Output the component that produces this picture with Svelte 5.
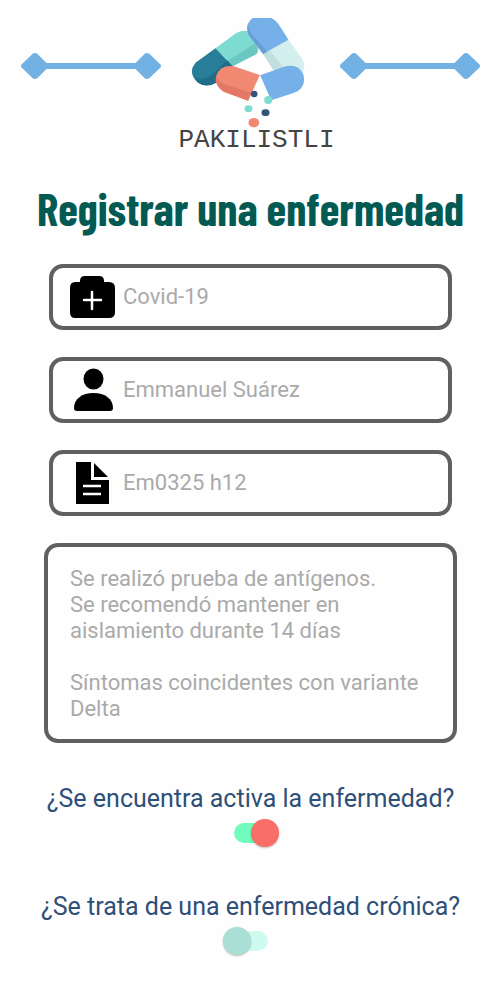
<script>
  let illness = $state('Covid-19');
  let patient = $state('Emmanuel Suárez');
  let code = $state('Em0325 h12');
  let notes = $state(
    'Se realizó prueba de antígenos.\nSe recomendó mantener en aislamiento durante 14 días\n\nSíntomas coincidentes con variante Delta'
  );
  let active = $state(true);
  let chronic = $state(false);
</script>

{#snippet ornament()}
  <svg class="ornament" viewBox="0 0 141 28" aria-hidden="true">
    <path d="M14 14H127" stroke="#72b1e4" stroke-width="6" />
    <path d="M1 12.500L12 2Q14.500 0 17 2L29 14 17 26Q14.500 28 12 26L1 15.500Q0 14 1 12.500Z" fill="#72b1e4" />
    <path d="M140 12.500L129 2Q126.500 0 124 2L112 14 124 26Q126.500 28 129 26L140 15.500Q141 14 140 12.500Z" fill="#72b1e4" />
  </svg>
{/snippet}

<main>
  <header>
    {@render ornament()}
    <div class="brand">
      <svg class="pills" viewBox="64 39 345 330" aria-hidden="true">
        <path d="M139 130L190 92Q218 70 243 80Q281 121 262 147L190 184Z" fill="#7edbd2" />
        <path d="M174 168L258 115Q269 137 262 147L190 184Z" fill="#6bc7c1" />
        <path d="M139 130L190 184L145 229Q112 252 84 231Q54 200 81 172Z" fill="#277e99" />
        <path d="M77 217Q100 230 127 211L174 166L190 184L145 232Q111 252 84 231Z" fill="#216c87" />
        <path d="M282 147L358 104L399 161Q411 184 399 208L320 195Z" fill="#d4efee" />
        <path d="M282 147L301 136L350 195H312Z" fill="#c2dfdf" />
        <path d="M250 39H306Q319 44 328 57L358 104L282 147L240 92Q223 62 250 39Z" fill="#75b1e8" />
        <path d="M237 62Q242 82 256 96L294 140L282 147L240 92Q233 78 237 62Z" fill="#689ed8" />
        <path d="M273 211L345 185Q387 174 402 207Q414 249 373 264L306 286Z" fill="#75b1e8" />
        <path d="M272 210L194 184Q155 178 142 210Q132 241 164 260L237 287Z" fill="#f18871" />
        <path d="M142 216Q150 235 177 241L246 264L237 287L164 260Q138 245 142 216Z" fill="#e37866" />
        <circle cx="255" cy="267" r="10" fill="#34547c" />
        <circle cx="297" cy="285" r="12" fill="#7edbd2" />
        <ellipse cx="238" cy="311" rx="12" ry="10" fill="#7edbd2" />
        <ellipse cx="289" cy="323" rx="12" ry="10" fill="#34547c" />
        <ellipse cx="254" cy="353" rx="16" ry="14" fill="#f18871" />
      </svg>
      <span class="name">PAKILISTLI</span>
    </div>
    {@render ornament()}
  </header>

  <h1>Registrar una enfermedad</h1>

  <form>
    <label class="field">
      <svg viewBox="0 0 46 46" aria-hidden="true">
        <path d="M6 8H11V7Q11 2 16 2H30Q35 2 35 7V8H40Q46 8 46 14V38Q46 44 40 44H6Q1 44 1 38V14Q1 8 6 8Z" />
        <path d="M23 18V35M15 26H32" fill="none" stroke="#fff" stroke-width="2.500" stroke-linecap="round" />
      </svg>
      <input type="text" aria-label="Enfermedad" bind:value={illness} />
    </label>

    <label class="field">
      <svg viewBox="0 0 46 46" aria-hidden="true">
        <ellipse cx="24.500" cy="12" rx="10" ry="10.500" />
        <path d="M5 41C5 32 13 26 24.500 26S44 32 44 41Q44 44 41 44H8Q5 44 5 41Z" />
      </svg>
      <input type="text" aria-label="Paciente" bind:value={patient} />
    </label>

    <label class="field">
      <svg viewBox="0 0 46 46" aria-hidden="true">
        <path d="M7 2H22V20H40V44H7Z" />
        <path d="M25 3L39 17H25Z" />
        <path d="M14 26H32M14 34H32" stroke="#fff" stroke-width="2.500" />
      </svg>
      <input type="text" aria-label="Código" bind:value={code} />
    </label>

    <textarea aria-label="Observaciones" bind:value={notes}></textarea>

    <label class="question">
      <span>¿Se encuentra activa la enfermedad?</span>
      <input type="checkbox" role="switch" bind:checked={active} />
    </label>

    <label class="question">
      <span>¿Se trata de una enfermedad crónica?</span>
      <input type="checkbox" role="switch" bind:checked={chronic} />
    </label>
  </form>
</main>

<style>
  :global(body) {
    margin: 0;
    background: #fefefe;
  }

  main {
    box-sizing: border-box;
    padding: 18px 20px 24px;
    font-family: Roboto, 'Liberation Sans', sans-serif;
  }

  header {
    display: flex;
    justify-content: space-between;
    align-items: flex-start;
  }

  .ornament {
    width: 142px;
    height: 28px;
    margin-top: 34px;
  }

  .brand {
    display: flex;
    flex-direction: column;
    align-items: flex-start;
    padding-left: 12px;
  }

  .pills {
    width: 116px;
    height: 110px;
    margin-left: 12px;
  }

  .name {
    font: 26px/24px 'Courier New', 'Liberation Mono', monospace;
    color: #444;
  }

  h1 {
    margin: 28px 0;
    font: bold 45px/56px 'Barlow Condensed', 'Roboto Condensed', 'Liberation Sans Narrow', sans-serif;
    text-align: center;
    white-space: nowrap;
    color: #035a52;
  }

  form {
    display: flex;
    flex-direction: column;
    padding: 0 24px;
  }

  .field {
    box-sizing: border-box;
    display: flex;
    align-items: center;
    gap: 8px;
    height: 66px;
    margin: 0 5px 27px;
    padding: 0 16px;
    border: 4px solid #606060;
    border-radius: 14px;
  }

  .field svg {
    flex: none;
    width: 46px;
    height: 46px;
  }

  .field input {
    flex: 1;
    min-width: 0;
    padding: 0;
    border: 0;
    outline: 0;
    background: none;
    font: 22px/26px Roboto, 'Liberation Sans', sans-serif;
    color: #aaa;
  }

  textarea {
    box-sizing: border-box;
    height: 200px;
    padding: 19px 22px 0;
    border: 4px solid #606060;
    border-radius: 14px;
    outline: 0;
    resize: none;
    overflow: hidden;
    background: none;
    font: 22px/26px Roboto, 'Liberation Sans', sans-serif;
    color: #aaa;
  }

  .question {
    display: flex;
    flex-direction: column;
    align-items: center;
    gap: 5px;
    margin: 41px -10px 0;
    padding-bottom: 4px;
    font-size: 25px;
    line-height: 30px;
    text-align: center;
    color: #2e4f78;
  }

  .question input {
    appearance: none;
    display: grid;
    align-items: center;
    width: 56px;
    height: 28px;
    margin: 0;
  }

  .question input::before,
  .question input::after {
    content: '';
    grid-area: 1 / 1;
  }

  .question input::before {
    justify-self: center;
    width: 34px;
    height: 20px;
    border-radius: 10px;
    background: #cffaf0;
  }

  .question input::after {
    justify-self: start;
    width: 28px;
    height: 28px;
    border-radius: 50%;
    background: #a9dfd4;
    box-shadow: 0 1px 2px rgb(0 0 0 / 25%);
  }

  .question input:checked::before {
    background: #71fcbd;
  }

  .question input:checked::after {
    justify-self: end;
    background: #f96f67;
  }
</style>
